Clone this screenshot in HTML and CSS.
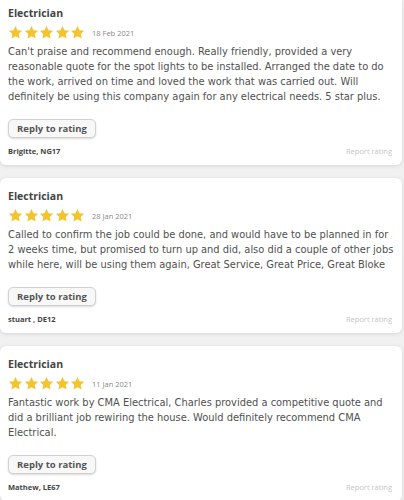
FILE: index.html
```html
<!DOCTYPE html>
<html lang="en">
<head>
  <meta charset="UTF-8">
  <title>Ratings</title>
  <link rel="stylesheet" href="styles.css">
</head>
<body>

  <div class="reviews">

    <div class="review">
      <h3>Electrician</h3>
      <div class="rating-line">
        <div class="stars">
          <svg viewBox="0 0 24 24"><path d="M12 1.5l3.2 6.9 7.4.8-5.5 5.1 1.5 7.4L12 17.9l-6.6 3.8 1.5-7.4L1.4 9.2l7.4-.8z"/></svg>
          <svg viewBox="0 0 24 24"><path d="M12 1.5l3.2 6.9 7.4.8-5.5 5.1 1.5 7.4L12 17.9l-6.6 3.8 1.5-7.4L1.4 9.2l7.4-.8z"/></svg>
          <svg viewBox="0 0 24 24"><path d="M12 1.5l3.2 6.9 7.4.8-5.5 5.1 1.5 7.4L12 17.9l-6.6 3.8 1.5-7.4L1.4 9.2l7.4-.8z"/></svg>
          <svg viewBox="0 0 24 24"><path d="M12 1.5l3.2 6.9 7.4.8-5.5 5.1 1.5 7.4L12 17.9l-6.6 3.8 1.5-7.4L1.4 9.2l7.4-.8z"/></svg>
          <svg viewBox="0 0 24 24"><path d="M12 1.5l3.2 6.9 7.4.8-5.5 5.1 1.5 7.4L12 17.9l-6.6 3.8 1.5-7.4L1.4 9.2l7.4-.8z"/></svg>
        </div>
        <span class="date">18 Feb 2021</span>
      </div>
      <p>Can't praise and recommend enough. Really friendly, provided a very reasonable quote for the spot lights to be installed. Arranged the date to do the work, arrived on time and loved the work that was carried out. Will definitely be using this company again for any electrical needs. 5 star plus.</p>
      <button>Reply to rating</button>
      <div class="review-foot">
        <span class="author">Brigitte, NG17</span>
        <a class="report">Report rating</a>
      </div>
    </div>

    <div class="review">
      <h3>Electrician</h3>
      <div class="rating-line">
        <div class="stars">
          <svg viewBox="0 0 24 24"><path d="M12 1.5l3.2 6.9 7.4.8-5.5 5.1 1.5 7.4L12 17.9l-6.6 3.8 1.5-7.4L1.4 9.2l7.4-.8z"/></svg>
          <svg viewBox="0 0 24 24"><path d="M12 1.5l3.2 6.9 7.4.8-5.5 5.1 1.5 7.4L12 17.9l-6.6 3.8 1.5-7.4L1.4 9.2l7.4-.8z"/></svg>
          <svg viewBox="0 0 24 24"><path d="M12 1.5l3.2 6.9 7.4.8-5.5 5.1 1.5 7.4L12 17.9l-6.6 3.8 1.5-7.4L1.4 9.2l7.4-.8z"/></svg>
          <svg viewBox="0 0 24 24"><path d="M12 1.5l3.2 6.9 7.4.8-5.5 5.1 1.5 7.4L12 17.9l-6.6 3.8 1.5-7.4L1.4 9.2l7.4-.8z"/></svg>
          <svg viewBox="0 0 24 24"><path d="M12 1.5l3.2 6.9 7.4.8-5.5 5.1 1.5 7.4L12 17.9l-6.6 3.8 1.5-7.4L1.4 9.2l7.4-.8z"/></svg>
        </div>
        <span class="date">28 Jan 2021</span>
      </div>
      <p>Called to confirm the job could be done, and would have to be planned in for 2 weeks time, but promised to turn up and did, also did a couple of other jobs while here, will be using them again, Great Service, Great Price, Great Bloke</p>
      <button>Reply to rating</button>
      <div class="review-foot">
        <span class="author">stuart , DE12</span>
        <a class="report">Report rating</a>
      </div>
    </div>

    <div class="review">
      <h3>Electrician</h3>
      <div class="rating-line">
        <div class="stars">
          <svg viewBox="0 0 24 24"><path d="M12 1.5l3.2 6.9 7.4.8-5.5 5.1 1.5 7.4L12 17.9l-6.6 3.8 1.5-7.4L1.4 9.2l7.4-.8z"/></svg>
          <svg viewBox="0 0 24 24"><path d="M12 1.5l3.2 6.9 7.4.8-5.5 5.1 1.5 7.4L12 17.9l-6.6 3.8 1.5-7.4L1.4 9.2l7.4-.8z"/></svg>
          <svg viewBox="0 0 24 24"><path d="M12 1.5l3.2 6.9 7.4.8-5.5 5.1 1.5 7.4L12 17.9l-6.6 3.8 1.5-7.4L1.4 9.2l7.4-.8z"/></svg>
          <svg viewBox="0 0 24 24"><path d="M12 1.5l3.2 6.9 7.4.8-5.5 5.1 1.5 7.4L12 17.9l-6.6 3.8 1.5-7.4L1.4 9.2l7.4-.8z"/></svg>
          <svg viewBox="0 0 24 24"><path d="M12 1.5l3.2 6.9 7.4.8-5.5 5.1 1.5 7.4L12 17.9l-6.6 3.8 1.5-7.4L1.4 9.2l7.4-.8z"/></svg>
        </div>
        <span class="date">11 Jan 2021</span>
      </div>
      <p>Fantastic work by CMA Electrical, Charles provided a competitive quote and did a brilliant job rewiring the house. Would definitely recommend CMA Electrical.</p>
      <button>Reply to rating</button>
      <div class="review-foot">
        <span class="author">Mathew, LE67</span>
        <a class="report">Report rating</a>
      </div>
    </div>

  </div>

</body>
</html>
```

FILE: styles.css
```css
body {
  margin: 0;
  background-color: #f1f1f1;
  font-family: 'Open Sans', 'DejaVu Sans', sans-serif;
  color: #4d4d4d;
}

/* lista de avaliações */
.reviews {
  display: flex;
  flex-direction: column;
  gap: 13px;
  margin-top: -5px;
  padding-right: 2px;
}

.review {
  background-color: white;
  border-radius: 6px;
  padding: 11px 5px 8px 8px;
  box-shadow: 0 1px 4px rgba(0, 0, 0, 0.12);
}

.review h3 {
  margin: 0;
  font-size: 10.5px;
  line-height: 14px;
  font-weight: bold;
  color: #444;
}

.rating-line {
  display: flex;
  align-items: center;
  gap: 7px;
  margin-top: 5px;
  height: 15px;
}

.stars {
  display: flex;
  gap: 0.5px;
}

.stars svg {
  width: 15px;
  height: 15px;
  fill: #f5c42c;
}

.date {
  font-size: 7.5px;
  color: #888;
}

.review p {
  margin: 4px 0 0;
  font-family: 'DejaVu Sans', sans-serif;
  font-size: 9.9px;
  line-height: 15px;
  color: #505050;
}

.review button {
  display: block;
  margin-top: 15px;
  height: 19px;
  padding: 0 8px;
  font-family: inherit;
  font-size: 9.5px;
  font-weight: bold;
  color: #555;
  background-color: #f8f8f8;
  border: 1px solid #d2d2d2;
  border-radius: 5px;
  box-shadow: 0 1px 2px rgba(0, 0, 0, 0.15);
  cursor: pointer;
}

.review-foot {
  display: flex;
  justify-content: space-between;
  align-items: center;
  margin-top: 7px;
  line-height: 12px;
  font-size: 7.5px;
  padding-right: 5px;
}

.author {
  font-weight: bold;
  color: #444;
}

.report {
  color: #c6c6c6;
  cursor: pointer;
}
```
